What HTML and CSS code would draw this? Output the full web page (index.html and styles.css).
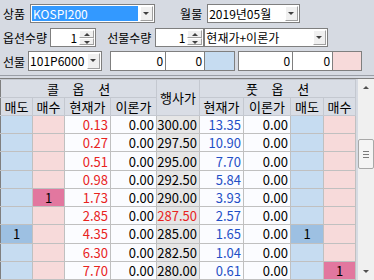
FILE: index.html
```html
<!DOCTYPE html>
<html lang="ko">
<head>
    <meta charset="UTF-8">
    <title>옵션 시세</title>
    <link rel="stylesheet" href="styles.css">
</head>
<body>
    <div class="top">
        <div class="row r1">
            <span class="lbl">상품</span>
            <div class="combo c-item"><span class="val sel">KOSPI200</span><span class="drop"></span></div>
            <span class="lbl l-month">월물</span>
            <div class="combo c-month"><span class="val">2019년05월</span><span class="drop"></span></div>
        </div>
        <div class="row r2">
            <span class="lbl">옵션수량</span>
            <div class="spin s-opt"><span class="val">1</span><span class="btns"><span class="up"></span><span class="dn"></span></span></div>
            <span class="lbl l-fut">선물수량</span>
            <div class="spin s-fut"><span class="val">1</span><span class="btns"><span class="up"></span><span class="dn"></span></span></div>
            <div class="combo c-mode"><span class="val">현재가+이론가</span><span class="drop"></span></div>
        </div>
        <div class="row r3">
            <span class="lbl">선물</span>
            <div class="combo c-fut"><span class="val">101P6000</span><span class="drop"></span></div>
            <div class="boxes b-left">
                <span class="box w56">0</span>
                <span class="box w39">0</span>
                <span class="box w30 blue"></span>
            </div>
            <div class="boxes b-right">
                <span class="box w55">0</span>
                <span class="box w40">0</span>
                <span class="box w29 pink"></span>
            </div>
        </div>
    </div>

    <div class="grid">
        <table class="board">
            <colgroup>
                <col style="width:32px"><col style="width:32px"><col style="width:46px"><col style="width:46px">
                <col style="width:43px">
                <col style="width:44px"><col style="width:47px"><col style="width:33px"><col style="width:32px">
            </colgroup>
            <thead>
                <tr>
                    <th colspan="4" class="wide">콜 옵 션</th>
                    <th rowspan="2">행사가</th>
                    <th colspan="4" class="wide">풋 옵 션</th>
                </tr>
                <tr>
                    <th>매도</th><th>매수</th><th>현재가</th><th>이론가</th>
                    <th>현재가</th><th>이론가</th><th>매도</th><th>매수</th>
                </tr>
            </thead>
            <tbody id="rows"></tbody>
        </table>
        <div class="scroll">
            <span class="arrow a-up"></span>
            <span class="track">
                <span class="thumb"><i></i><i></i><i></i></span>
            </span>
            <span class="arrow a-dn"></span>
        </div>
    </div>

    <script>
        var data = [
            ["", "", "0.13", "300.00", "13.35", "", ""],
            ["", "", "0.27", "297.50", "10.90", "", ""],
            ["", "", "0.51", "295.00", "7.70", "", ""],
            ["", "", "0.98", "292.50", "5.84", "", ""],
            ["", "1", "1.73", "290.00", "3.93", "", ""],
            ["", "", "2.85", "287.50", "2.57", "", ""],
            ["1", "", "4.35", "285.00", "1.65", "1", ""],
            ["", "", "6.30", "282.50", "1.04", "", ""],
            ["", "", "7.70", "280.00", "0.61", "", "1"]
        ];

        var body = document.getElementById("rows");
        data.forEach(function (d) {
            var atm = d[3] === "287.50";
            var row = document.createElement("tr");
            row.innerHTML =
                '<td class="sell' + (d[0] ? ' on' : '') + '">' + d[0] + '</td>' +
                '<td class="buy' + (d[1] ? ' on' : '') + '">' + d[1] + '</td>' +
                '<td class="px call">' + d[2] + '</td>' +
                '<td class="px">0.00</td>' +
                '<td class="strike' + (atm ? ' atm' : '') + '">' + d[3] + '</td>' +
                '<td class="px put">' + d[4] + '</td>' +
                '<td class="px">0.00</td>' +
                '<td class="sell' + (d[5] ? ' on' : '') + '">' + d[5] + '</td>' +
                '<td class="buy' + (d[6] ? ' on' : '') + '">' + d[6] + '</td>';
            body.appendChild(row);
        });
    </script>
</body>
</html>
```

FILE: styles.css
```css
body {
    margin: 0;
    width: 374px;
    height: 280px;
    overflow: hidden;
    background-color: #d6dae2;
    font-family: "Noto Sans CJK KR", sans-serif;
    font-size: 13px;
    color: #000;
}

/* top controls */
.top {
    height: 76px;
    padding-top: 4px;
    box-sizing: border-box;
    border-bottom: 1px solid #9a9ea6;
    font-size: 12px;
}

.row {
    display: flex;
    align-items: center;
}

.r1 {
    height: 19px;
}

.r2 {
    height: 19px;
    margin-top: 5px;
}

.r3 {
    height: 20px;
    margin-top: 4px;
}

.lbl {
    margin-left: 3px;
    line-height: 19px;
    white-space: nowrap;
}

.l-month {
    margin-left: 25px;
}

.l-fut {
    margin-left: 11px;
}

.combo,
.spin,
.box {
    display: flex;
    height: 100%;
    box-sizing: border-box;
    background-color: #fff;
    border: 1px solid #7f7f7f;
}

.combo .val,
.spin .val {
    flex: 1;
    line-height: 17px;
    padding-left: 1px;
    white-space: nowrap;
    overflow: hidden;
}

.combo .sel {
    margin: 1px;
    line-height: 15px;
    background-color: #3399ff;
    color: #fff;
}

.drop {
    width: 13px;
    margin: 1px;
    box-sizing: border-box;
    background-color: #f0f0f0;
    border: 1px solid;
    border-color: #fff #a0a0a0 #a0a0a0 #fff;
    position: relative;
}

.drop::after {
    content: "";
    position: absolute;
    left: 2px;
    top: 5px;
    border-left: 3px solid transparent;
    border-right: 3px solid transparent;
    border-top: 3px solid #404040;
}

.c-item {
    width: 125px;
    margin-left: 5px;
}

.c-month {
    width: 93px;
    margin-left: 5px;
}

.c-mode {
    width: 124px;
}

.c-fut {
    width: 74px;
    margin-left: 3px;
}

.spin .val {
    text-align: right;
    padding-right: 2px;
}

.btns {
    display: flex;
    flex-direction: column;
    width: 15px;
    margin: 1px 1px 1px 0;
}

.btns span {
    flex: 1;
    position: relative;
    box-sizing: border-box;
    background-color: #f0f0f0;
    border: 1px solid;
    border-color: #fff #a0a0a0 #a0a0a0 #fff;
}

.btns span::after {
    content: "";
    position: absolute;
    left: 4px;
    top: 2px;
    border-left: 3px solid transparent;
    border-right: 3px solid transparent;
}

.btns .up::after {
    border-bottom: 3px solid #404040;
}

.btns .dn::after {
    border-top: 3px solid #404040;
}

.s-opt {
    width: 46px;
    margin-left: 3px;
}

.s-fut {
    width: 49px;
    margin-left: 4px;
}

.boxes {
    display: flex;
    height: 100%;
}

.b-left {
    margin-left: 8px;
}

.b-right {
    margin-left: 3px;
}

.box {
    justify-content: flex-end;
    line-height: 18px;
    padding-right: 2px;
}

.box + .box {
    border-left: none;
}

.w56 { width: 56px; }
.w39 { width: 39px; }
.w30 { width: 30px; }
.w55 { width: 55px; }
.w40 { width: 40px; }
.w29 { width: 29px; }

.box.blue {
    background-color: #c6dcf1;
}

.box.pink {
    background-color: #f7dada;
}

/* option board */
.grid {
    display: flex;
    margin-top: 2px;
    border-top: 1px solid #7f7f7f;
}

.board {
    width: 355px;
    table-layout: fixed;
    border-collapse: collapse;
}

.board th,
.board td {
    height: 17px;
    padding: 0;
    line-height: 17px;
    font-weight: normal;
    white-space: nowrap;
    overflow: hidden;
}

.board th {
    background-color: #d9dde5;
    border: 1px solid #c4c8d0;
    text-align: center;
}

.board th.wide {
    word-spacing: 10px;
}

.board td {
    border: 1px solid #c0c0c0;
    text-align: right;
    padding-right: 2px;
}

.board tr > :first-child {
    border-left-color: #7f7f7f;
}

.sell {
    background-color: #c6dcf1;
}

.buy {
    background-color: #f7dada;
}

.board td.sell,
.board td.buy {
    text-align: center;
    padding-right: 0;
}

.sell.on {
    background-color: #9dc0e2;
}

.buy.on {
    background-color: #e2779f;
}

.px {
    background-color: #fbfcff;
}

.call {
    color: #e8231e;
}

.put {
    color: #1f4fc6;
}

.strike {
    background-color: #e6e6e6;
}

.strike.atm {
    color: #e8231e;
}

.scroll {
    display: flex;
    flex-direction: column;
    width: 16px;
    height: 201px;
    margin-left: 2px;
    background-color: #f0f0f0;
}

.arrow {
    height: 17px;
    position: relative;
}

.arrow::after {
    content: "";
    position: absolute;
    left: 5px;
    top: 7px;
    border-left: 3px solid transparent;
    border-right: 3px solid transparent;
}

.a-up::after {
    border-bottom: 3px solid #505050;
}

.a-dn::after {
    border-top: 3px solid #505050;
}

.track {
    flex: 1;
}

.thumb {
    display: flex;
    flex-direction: column;
    align-items: center;
    justify-content: center;
    gap: 2px;
    height: 30px;
    margin-top: 43px;
    box-sizing: border-box;
    background-color: #f4f4f4;
    border: 1px solid #a8a8a8;
    border-radius: 2px;
}

.thumb i {
    width: 6px;
    height: 1px;
    background-color: #7a7a7a;
}
```
